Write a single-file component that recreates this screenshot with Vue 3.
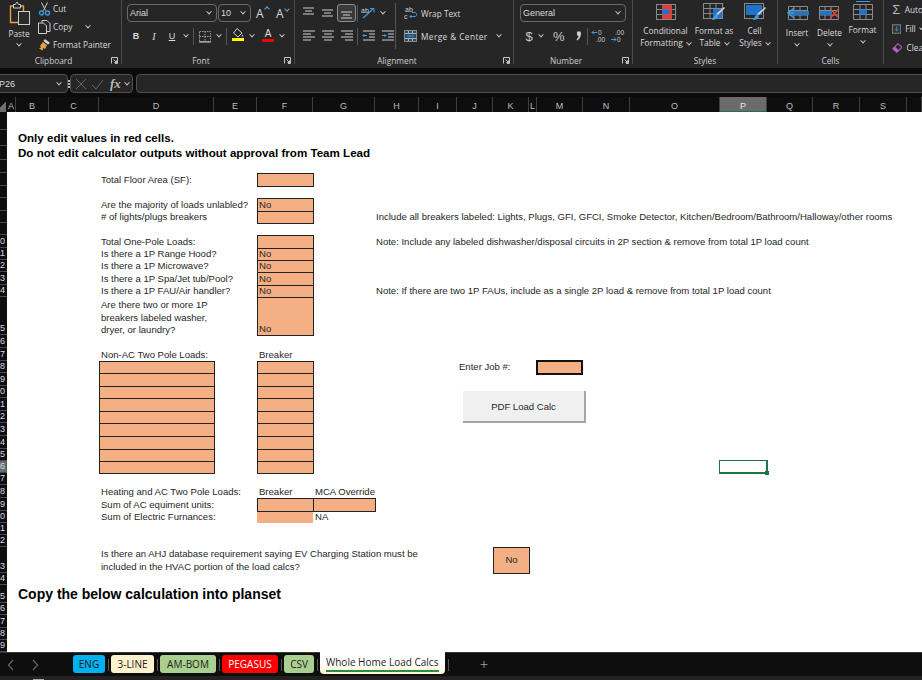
<script setup>
const cols = [
  ["A", 9], ["B", 33], ["C", 50], ["D", 115], ["E", 43], ["F", 56], ["G", 62], ["H", 44],
  ["I", 38], ["J", 36], ["K", 36], ["L", 8], ["M", 46], ["N", 47], ["O", 90], ["P", 47],
  ["Q", 46], ["R", 47], ["S", 47], ["", 15],
];
const colNames = cols.map((c) => c[0]);
const colTemplate = cols.map((c) => c[1] + "px").join(" ");

// row tops in the sheet, last one closes the grid
const rowTops = [
  112, 130, 146, 160, 173, 186, 198, 211, 223, 235, 248, 260, 272, 285, 297, 335, 348, 361, 373, 386,
  398, 411, 423, 436, 449, 461, 473, 485, 498, 511, 523, 535, 547, 573, 585, 603, 615, 628, 640, 652,
];
const rowHeights = rowTops.slice(1).map((t, i) => t - rowTops[i]);
const rowTemplate = rowHeights.map((h) => h + "px").join(" ");

const cells = [
  { c: "B", r: 2, t: "Only edit values in red cells.", k: "bold" },
  { c: "B", r: 3, t: "Do not edit calculator outputs without approval from Team Lead", k: "bold" },
  { c: "D", r: 5, t: "Total Floor Area (SF):" },
  { c: "D", r: 7, t: "Are the majority of loads unlabled?" },
  { c: "D", r: 8, t: "# of lights/plugs breakers" },
  { c: "H", r: 8, t: "Include all breakers labeled: Lights, Plugs, GFI, GFCI, Smoke Detector, Kitchen/Bedroom/Bathroom/Halloway/other rooms", k: "note" },
  { c: "D", r: 10, t: "Total One-Pole Loads:" },
  { c: "H", r: 10, t: "Note: Include any labeled dishwasher/disposal circuits in 2P section & remove from total 1P load count", k: "note" },
  { c: "D", r: 11, t: "Is there a 1P Range Hood?" },
  { c: "D", r: 12, t: "Is there a 1P Microwave?" },
  { c: "D", r: 13, t: "Is there a 1P Spa/Jet tub/Pool?" },
  { c: "D", r: 14, t: "Is there a 1P FAU/Air handler?" },
  { c: "H", r: 14, t: "Note: If there are two 1P FAUs, include as a single 2P load & remove from total 1P load count", k: "note" },
  { c: "D", r: 15, t: "Are there two or more 1P\nbreakers labeled washer,\ndryer, or laundry?", k: "multi" },
  { c: "D", r: 17, t: "Non-AC Two Pole Loads:" },
  { c: "F", r: 17, t: "Breaker" },
  { c: "J", r: 18, t: "Enter Job #:" },
  { c: "D", r: 28, t: "Heating and AC Two Pole Loads:" },
  { c: "F", r: 28, t: "Breaker" },
  { c: "G", r: 28, t: "MCA Override" },
  { c: "D", r: 29, t: "Sum of AC equiment units:" },
  { c: "D", r: 30, t: "Sum of Electric Furnances:" },
  { c: "F", r: 30, t: "", k: "fill bare" },
  { c: "G", r: 30, t: "NA" },
  { c: "D", r: 33, t: "Is there an AHJ database requirement saying EV Charging Station must be\nincluded in the HVAC portion of the load calcs?" },
  { c: "K", r: 33, t: "No", k: "fill center" },
  { c: "B", r: 35, t: "Copy the below calculation into planset", k: "big" },
  { c: "M", r: 18, t: "", k: "fill job" },
  { c: "F", r: 5, t: "", k: "fill" },
  { c: "F", r: 7, t: "No", k: "fill" },
  { c: "F", r: 8, t: "", k: "fill" },
  { c: "F", r: 10, t: "", k: "fill" },
  { c: "F", r: 11, t: "No", k: "fill" },
  { c: "F", r: 12, t: "No", k: "fill" },
  { c: "F", r: 13, t: "No", k: "fill" },
  { c: "F", r: 14, t: "No", k: "fill" },
  { c: "F", r: 15, t: "No", k: "fill end" },
  { c: "F", r: 29, t: "", k: "fill" },
  { c: "G", r: 29, t: "", k: "fill" },
];
for (let r = 18; r <= 26; r++) {
  cells.push({ c: "D", r, t: "", k: "fill" }, { c: "F", r, t: "", k: "fill" });
}

function cellPlace(cell) {
  return { gridColumn: colNames.indexOf(cell.c) + 2, gridRow: cell.r };
}

const alignRows = [
  [
    { d: "M2 2h11M4 5h7M2 8h11" },
    { d: "M2 4h11M4 7h7M2 10h11" },
    { d: "M2 6h11M4 9h7M2 12h11", on: true },
  ],
  [
    { d: "M2 2h12M2 5h8M2 8h12M2 11h8" },
    { d: "M2 2h12M4 5h8M2 8h12M4 11h8" },
    { d: "M2 2h12M6 5h8M2 8h12M6 11h8" },
  ],
];

const tabs = [
  { t: "ENG", k: "eng" },
  { t: "3-LINE", k: "line" },
  { t: "AM-BOM", k: "bom" },
  { t: "PEGASUS", k: "peg" },
  { t: "CSV", k: "csv" },
];
</script>

<template>
  <div class="app">
    <div class="ribbon">
      <section class="group clipboard">
        <div class="body clip-body">
          <div class="paste">
            <svg width="22" height="24" viewBox="0 0 22 24">
              <path d="M5 4H1.500V20.500H9" fill="none" stroke="#e6a040" stroke-width="1.400" />
              <path d="M11 4h3.500v5" fill="none" stroke="#e6a040" stroke-width="1.400" />
              <path d="M4.500 2.500h2l1-2h1l1 2h2V6h-7z" fill="none" stroke="#cfcfcf" />
              <rect x="9.500" y="9.500" width="11" height="13" fill="#2a2a2a" stroke="#cfcfcf" />
            </svg>
            <span>Paste</span>
            <i class="chev"></i>
          </div>
          <div class="clip-tools">
            <div class="tool-row">
              <svg width="13" height="14" viewBox="0 0 13 14">
                <path d="M3.500 0.500l4 8M9.500 0.500l-4 8" stroke="#cfcfcf" fill="none" />
                <circle cx="3.500" cy="11" r="2" fill="none" stroke="#3d9be0" stroke-width="1.300" />
                <circle cx="9.500" cy="11" r="2" fill="none" stroke="#3d9be0" stroke-width="1.300" />
              </svg>
              <span>Cut</span>
            </div>
            <div class="tool-row">
              <svg width="13" height="14" viewBox="0 0 13 14">
                <path d="M4 2.500V0.500h5l3 3v8H8.500" fill="none" stroke="#cfcfcf" />
                <path d="M0.500 3h5l3 3v7.500h-8z" fill="none" stroke="#cfcfcf" />
              </svg>
              <span>Copy</span>
              <i class="chev copy-chev"></i>
            </div>
            <div class="tool-row">
              <svg width="13" height="14" viewBox="0 0 13 14">
                <path d="M7 1l5 4-2 1.500L5.500 3z" fill="#d8d8d8" />
                <path d="M5 4l4 3-2 4-1.500-1-1 2.500L1 10.500l2-1L2 8z" fill="#e6a040" />
              </svg>
              <span>Format Painter</span>
            </div>
          </div>
        </div>
        <footer class="label">
          Clipboard
          <svg class="launch" width="7" height="7" viewBox="0 0 7 7"><path d="M0.500 6.500V0.500H6.500V6.500H4M2.500 2.500l3 3M5.500 3.500v2h-2" fill="none" stroke="#c4c4c4" /></svg>
        </footer>
      </section>

      <section class="group font">
        <div class="body stack">
          <div class="row first">
            <div class="select font-name">Arial<i class="chev"></i></div>
            <div class="select font-size">10<i class="chev"></i></div>
            <span class="grow-a">A<em class="up"></em></span>
            <span class="shrink-a">A<em class="down"></em></span>
          </div>
          <div class="row second">
            <span class="btn t18 b-bold">B</span>
            <span class="btn t18 b-italic">I</span>
            <span class="btn t18 b-under">U</span>
            <span class="btn t10"><i class="chev"></i></span>
            <span class="sep s-a"></span>
            <span class="btn t18">
              <svg width="14" height="13" viewBox="0 0 14 13">
                <path d="M1.500 1.500h11v10h-11zM7 1.500v10M1.500 6.500h11" fill="none" stroke="#9a9a9a" stroke-dasharray="1.500 1" />
                <path d="M1 12h12" stroke="#d0d0d0" />
              </svg>
            </span>
            <span class="btn t10"><i class="chev"></i></span>
            <span class="sep s-b"></span>
            <span class="btn t18 colored">
              <svg width="12" height="10" viewBox="0 0 12 10">
                <path d="M5 0.500l5 4.500-4 4L1.500 5z" fill="none" stroke="#d0d0d0" />
                <path d="M10.500 6.500l1 2h-2z" fill="#d0d0d0" />
              </svg>
              <u class="bar yellow"></u>
            </span>
            <span class="btn t10 narrow"><i class="chev"></i></span>
            <span class="btn t18 colored gap3">
              <span class="color-a">A</span>
              <u class="bar red"></u>
            </span>
            <span class="btn t10"><i class="chev"></i></span>
          </div>
        </div>
        <footer class="label">
          Font
          <svg class="launch" width="7" height="7" viewBox="0 0 7 7"><path d="M0.500 6.500V0.500H6.500V6.500H4M2.500 2.500l3 3M5.500 3.500v2h-2" fill="none" stroke="#c4c4c4" /></svg>
        </footer>
      </section>

      <section class="group alignment">
        <div class="body align-body">
          <div class="stack align-left">
            <div v-for="(line, i) in alignRows" :key="i" class="row" :class="i === 0 ? 'first' : 'second'">
              <span v-for="ic in line" :key="ic.d" class="btn t19" :class="{ on: ic.on }">
                <svg width="15" height="14" viewBox="0 0 15 14">
                  <path :d="ic.d" stroke="#cfcfcf" fill="none" />
                </svg>
              </span>
              <span class="sep s-c"></span>
              <template v-if="i === 0">
                <span class="btn t19">
                  <svg width="16" height="14" viewBox="0 0 16 14">
                    <path d="M2 12L12 3" stroke="#3d9be0" stroke-width="1.200" />
                    <path d="M9 2.500h4v4" stroke="#3d9be0" fill="none" />
                    <text x="0" y="7" font-size="7" fill="#cfcfcf" font-family="Liberation Sans">ab</text>
                  </svg>
                </span>
                <span class="btn t10"><i class="chev"></i></span>
              </template>
              <template v-else>
                <span class="btn t19">
                  <svg width="15" height="14" viewBox="0 0 15 14">
                    <path d="M2 2h12M8 5h6M8 8h6M2 11h12" stroke="#cfcfcf" fill="none" />
                    <path d="M6 6.500H2M3.500 5L2 6.500 3.500 8" stroke="#3d9be0" fill="none" />
                  </svg>
                </span>
                <span class="btn t19">
                  <svg width="15" height="14" viewBox="0 0 15 14">
                    <path d="M2 2h12M8 5h6M8 8h6M2 11h12" stroke="#cfcfcf" fill="none" />
                    <path d="M2 6.500h4M4.500 5L6 6.500 4.500 8" stroke="#3d9be0" fill="none" />
                  </svg>
                </span>
              </template>
            </div>
          </div>
          <div class="align-right stack">
            <div class="row first wide-tool">
              <svg width="14" height="14" viewBox="0 0 14 14">
                <text x="1" y="6" font-size="7" fill="#cfcfcf" font-family="Liberation Sans">ab</text>
                <text x="0" y="13" font-size="7" fill="#cfcfcf" font-family="Liberation Sans">c</text>
                <path d="M6 10.500h5c2 0 2-4 0-4H8M7.500 9L6 10.500 7.500 12" stroke="#3d9be0" fill="none" />
              </svg>
              <span class="wrap-text">Wrap Text</span>
            </div>
            <div class="row second wide-tool">
              <svg width="14" height="13" viewBox="0 0 14 13">
                <rect x="0.500" y="0.500" width="12" height="11" fill="#2a4a68" stroke="#8a8a8a" />
                <path d="M1 3.500h11M1 8.500h11M4.500 1v2M8.500 1v2M4.500 9v2M8.500 9v2" stroke="#b0b0b0" />
                <path d="M3 6h7" stroke="#3d9be0" />
              </svg>
              <span class="merge-text">Merge &amp; Center</span>
              <i class="chev merge-chev"></i>
            </div>
          </div>
        </div>
        <footer class="label">
          Alignment
          <svg class="launch" width="7" height="7" viewBox="0 0 7 7"><path d="M0.500 6.500V0.500H6.500V6.500H4M2.500 2.500l3 3M5.500 3.500v2h-2" fill="none" stroke="#c4c4c4" /></svg>
        </footer>
      </section>

      <section class="group number">
        <div class="body stack">
          <div class="row first">
            <div class="select num-format">General<i class="chev"></i></div>
          </div>
          <div class="row second num-tools">
            <span class="num-sym dollar">$</span>
            <span class="btn t10"><i class="chev"></i></span>
            <span class="num-sym pct">%</span>
            <svg class="comma" width="6" height="10" viewBox="0 0 6 10">
              <path d="M1 0.500h3.500c1 2.500 0.500 6-3 9L0.500 8.500C2 7 2.500 5.500 2.500 4.500H1z" fill="#d0d0d0" />
            </svg>
            <span class="sep s-d"></span>
            <span class="btn t19">
              <svg width="15" height="14" viewBox="0 0 15 14">
                <text x="7" y="6" font-size="6.500" fill="#cfcfcf" font-family="Liberation Sans">0</text>
                <text x="5" y="13" font-size="6.500" fill="#cfcfcf" font-family="Liberation Sans">.00</text>
                <path d="M6 3.500H1M3 1.500L1 3.500l2 2" stroke="#3d9be0" fill="none" />
              </svg>
            </span>
            <span class="btn t19">
              <svg width="15" height="14" viewBox="0 0 15 14">
                <text x="5" y="6" font-size="6.500" fill="#cfcfcf" font-family="Liberation Sans">.00</text>
                <text x="7" y="13" font-size="6.500" fill="#cfcfcf" font-family="Liberation Sans">0</text>
                <path d="M1 10.500h5M4 8.500l2 2-2 2" stroke="#3d9be0" fill="none" />
              </svg>
            </span>
          </div>
        </div>
        <footer class="label">
          Number
          <svg class="launch" width="7" height="7" viewBox="0 0 7 7"><path d="M0.500 6.500V0.500H6.500V6.500H4M2.500 2.500l3 3M5.500 3.500v2h-2" fill="none" stroke="#c4c4c4" /></svg>
        </footer>
      </section>

      <section class="group styles">
        <div class="body big-row">
          <div class="big-btn w49">
            <svg width="22" height="18" viewBox="0 0 22 18">
              <rect x="1.500" y="1.500" width="19" height="15" fill="none" stroke="#8a8a8a" />
              <path d="M8 1.500v15M14 1.500v15M1.500 6.500h19M1.500 11.500h19" stroke="#8a8a8a" />
              <rect x="7" y="2" width="10" height="4.500" fill="#e03c3c" />
              <rect x="7" y="6.500" width="7" height="5" fill="#1f74c9" />
              <rect x="14" y="6.500" width="3" height="5" fill="#e03c3c" />
              <rect x="7" y="11.500" width="10" height="4.500" fill="#e03c3c" />
            </svg>
            <span>Conditional</span>
            <span>Formatting<i class="chev inline"></i></span>
          </div>
          <div class="big-btn w48">
            <svg width="24" height="18" viewBox="0 0 24 18">
              <rect x="1.500" y="0.500" width="19" height="15" fill="none" stroke="#8a8a8a" />
              <path d="M8 0.500v15M14 0.500v15M1.500 5.500h19M1.500 10.500h19" stroke="#8a8a8a" />
              <rect x="11" y="6" width="9" height="9" fill="#1f74c9" />
              <path d="M22 4l1 1-7 7-2-1z" fill="#cfcfcf" />
              <path d="M14 11l2 2c-1 3-3 4-6 4 1-2 2-4 4-6z" fill="#3d9be0" />
            </svg>
            <span>Format as</span>
            <span>Table<i class="chev inline"></i></span>
          </div>
          <div class="big-btn w29">
            <svg width="24" height="18" viewBox="0 0 24 18">
              <rect x="1.500" y="0.500" width="19" height="15" fill="none" stroke="#8a8a8a" />
              <rect x="3" y="2" width="16" height="10" fill="#1f74c9" />
              <path d="M22 4l1 1-7 7-2-1z" fill="#cfcfcf" />
              <path d="M14 11l2 2c-1 3-3 4-6 4 1-2 2-4 4-6z" fill="#3d9be0" />
            </svg>
            <span>Cell</span>
            <span>Styles<i class="chev inline"></i></span>
          </div>
        </div>
        <footer class="label plain">Styles</footer>
      </section>

      <section class="group cellsgrp">
        <div class="body big-row">
          <div class="big-btn w32 low">
            <svg width="25" height="18" viewBox="0 0 25 18">
              <path d="M3.500 2.500h19v13h-19zM9 2.500v13M15 2.500v13M3.500 6.500h19M3.500 11h19" fill="none" stroke="#8a8a8a" />
              <rect x="6" y="7" width="18" height="4" fill="#1f74c9" />
              <path d="M9 4L3 9l6 5M3 9h6" fill="none" stroke="#3d9be0" stroke-width="1.400" />
            </svg>
            <span>Insert</span>
            <i class="chev"></i>
          </div>
          <div class="big-btn w33 low">
            <svg width="25" height="18" viewBox="0 0 25 18">
              <path d="M2.500 2.500h19v13h-19zM8 2.500v13M14 2.500v13M2.500 6.500h19M2.500 11h19" fill="none" stroke="#8a8a8a" />
              <rect x="3" y="7" width="12" height="4" fill="#1f74c9" />
              <path d="M13 4.500l9 10M22 4.500l-9 10" stroke="#d84a3a" stroke-width="1.300" />
            </svg>
            <span>Delete</span>
            <i class="chev"></i>
          </div>
          <div class="big-btn w33 high">
            <svg width="22" height="21" viewBox="0 0 22 21">
              <path d="M4 1.500h14" stroke="#3d9be0" />
              <path d="M1.500 4.500h19v15h-19zM8 4.500v15M14 4.500v15M1.500 9.500h19M1.500 14.500h19" fill="none" stroke="#8a8a8a" />
              <rect x="7" y="9.500" width="8" height="5" fill="#1f74c9" />
            </svg>
            <span>Format</span>
            <i class="chev"></i>
          </div>
        </div>
        <footer class="label plain">Cells</footer>
      </section>

      <section class="group editing">
        <div class="edit-row">
          <span class="sigma">Σ</span><span>Auto</span>
        </div>
        <div class="edit-row">
          <svg width="12" height="12" viewBox="0 0 12 12">
            <rect x="0.500" y="0.500" width="11" height="11" fill="#333" stroke="#9a9a9a" />
            <path d="M6 2.500v6M3.500 6L6 8.500 8.500 6" stroke="#3d9be0" fill="none" />
          </svg>
          <span>Fill</span><i class="chev"></i>
        </div>
        <div class="edit-row">
          <svg width="13" height="12" viewBox="0 0 13 12">
            <path d="M7.500 0.500L12.500 5 6 11.500 1 7z" fill="none" stroke="#c05cc8" stroke-width="1.300" />
            <path d="M4 4.500L8.500 9 6 11.500 1 7z" fill="#c05cc8" />
          </svg>
          <span>Clea</span>
        </div>
      </section>
    </div>

    <div class="formula">
      <div class="namebox"><span>P26</span><i class="chev"></i></div>
      <div class="dots"><i></i><i></i><i></i></div>
      <div class="fx-box">
        <svg width="12" height="12" viewBox="0 0 12 12"><path d="M1 1l10 10M11 1L1 11" stroke="#666" fill="none" /></svg>
        <svg width="13" height="12" viewBox="0 0 13 12"><path d="M1 7l4 4 7-9" stroke="#666" fill="none" /></svg>
        <span class="fx">fx</span>
        <i class="chev"></i>
      </div>
      <div class="input"></div>
    </div>

    <div class="colhead">
      <div class="corner"></div>
      <div class="colnames" :style="{ gridTemplateColumns: colTemplate }">
        <div v-for="c in cols" :key="c[0]" class="colname" :class="{ active: c[0] === 'P' }">{{ c[0] }}</div>
      </div>
    </div>

    <div class="sheet" :style="{ gridTemplateColumns: '7px ' + colTemplate, gridTemplateRows: rowTemplate }">
      <div
        v-for="(h, i) in rowHeights"
        :key="'row' + i"
        class="rowname"
        :class="{ active: i === 25 }"
        :style="{ gridRow: i + 1 }"
      >
        <span>{{ i >= 9 ? i + 1 : "" }}</span>
      </div>
      <div class="paper"></div>
      <div
        v-for="cell in cells"
        :key="cell.c + cell.r"
        class="cell"
        :class="cell.k"
        :style="cellPlace(cell)"
      >{{ cell.t }}</div>
      <div class="selected"><i></i></div>
      <div class="macro">PDF Load Calc</div>
    </div>

    <div class="tabbar">
      <svg class="nav" width="8" height="12" viewBox="0 0 8 12"><path d="M6 1L1.500 6 6 11" stroke="#666" fill="none" stroke-width="1.200" /></svg>
      <svg class="nav next" width="8" height="12" viewBox="0 0 8 12"><path d="M2 1l4.500 5L2 11" stroke="#666" fill="none" stroke-width="1.200" /></svg>
      <div class="tabs">
        <template v-for="tab in tabs" :key="tab.t">
          <div class="tab" :class="tab.k">{{ tab.t }}</div>
          <span class="tab-sep"></span>
        </template>
        <div class="tab-active"><span>Whole Home Load Calcs</span></div>
        <span class="tab-sep"></span>
        <span class="plus">+</span>
      </div>
    </div>
    <div class="status"><i></i></div>
  </div>
</template>

<style scoped>
.app {
  width: 922px;
  height: 680px;
  overflow: hidden;
  background: #0b0b0b;
  color: #dcdcdc;
  font-family: "Open Sans", "Noto Sans", sans-serif;
  font-size: 8.3px;
}

/* ribbon */
.ribbon {
  display: flex;
  height: 68px;
  background: #262626;
}
.group {
  flex: none;
  display: flex;
  flex-direction: column;
  height: 64px;
  border-right: 1px solid #4c4c4c;
}
.clipboard { width: 121px; }
.font { width: 172px; }
.alignment { width: 218px; }
.number { width: 118px; }
.styles { width: 144px; }
.cellsgrp { width: 105px; }
.editing { width: 39px; border-right: 0; padding-left: 8px; box-sizing: border-box; }
.body {
  flex: 1;
  min-height: 0;
}
.label {
  position: relative;
  height: 14px;
  margin-bottom: -4px;
  padding-right: 14px;
  line-height: 14px;
  text-align: center;
  color: #d0d0d0;
  font-size: 8.3px;
}
.label.plain { padding-right: 0; }
.launch {
  position: absolute;
  right: 3px;
  top: 3px;
}
.chev {
  display: inline-block;
  width: 3px;
  height: 3px;
  border-right: 1px solid #c8c8c8;
  border-bottom: 1px solid #c8c8c8;
  transform: rotate(45deg) translate(-1px, -1px);
}
.chev.inline {
  margin-left: 4px;
  width: 3px;
  height: 3px;
}
.clip-body {
  display: flex;
}
.paste {
  width: 38px;
  display: flex;
  flex-direction: column;
  align-items: center;
  padding-top: 2px;
  box-sizing: border-box;
}
.paste svg { margin-left: 2px; }
.paste span { margin-top: 2px; color: #dcdcdc; }
.paste .chev { margin-top: 4px; }
.clip-tools {
  display: flex;
  flex-direction: column;
  padding-top: 0;
}
.tool-row {
  display: flex;
  align-items: center;
  gap: 2px;
  height: 18px;
  margin-bottom: 1px;
}
.tool-row svg { width: 13px; margin-right: 0; }
.copy-chev { margin-left: 12px; }

.stack {
  display: flex;
  flex-direction: column;
}
.row {
  display: flex;
  align-items: center;
}
.row.first {
  height: 18px;
  margin-top: 4px;
}
.row.second {
  height: 18px;
  margin-top: 5px;
}
.select {
  display: flex;
  align-items: center;
  justify-content: space-between;
  height: 18px;
  box-sizing: border-box;
  padding: 0 5px 0 2px;
  border: 1px solid #6a6a6a;
  border-radius: 4px;
  font-family: "Liberation Sans", sans-serif;
  font-size: 9px;
}
.font .stack { padding-left: 5px; }
.font-name { width: 90px; }
.font-size { width: 33px; margin-left: 1px; }
.grow-a, .shrink-a {
  position: relative;
  font-size: 12px;
  margin-left: 5px;
  width: 15px;
  color: #d8d8d8;
}
.up, .down {
  position: absolute;
  top: 2px;
  left: 9px;
  width: 3px;
  height: 3px;
  border-left: 1px solid #5aa8e6;
  border-top: 1px solid #5aa8e6;
  transform: rotate(45deg);
}
.down { transform: rotate(225deg); }
.btn {
  flex: none;
  display: flex;
  align-items: center;
  justify-content: center;
  height: 18px;
  box-sizing: border-box;
}
.t18 { width: 18px; }
.t19 { width: 19px; }
.t10 { width: 10px; }
.b-bold { font-family: "Liberation Sans", sans-serif; font-weight: 700; font-size: 9px; }
.b-italic { font-family: "Liberation Serif", serif; font-style: italic; font-size: 10px; }
.b-under { font-family: "Liberation Sans", sans-serif; text-decoration: underline; font-size: 9px; }
.sep {
  flex: none;
  width: 1px;
  height: 17px;
  background: #555;
}
.s-a { margin: 0 2px 0 2px; }
.s-b { margin: 0 2px 0 2px; }
.s-c { margin: 0 1px; }
.s-d { margin: 0 1px 0 5px; }
.colored {
  flex-direction: column;
  justify-content: flex-start;
  padding-top: 1px;
}
.narrow { width: 9px; }
.gap3 { margin-left: 3px; }
.color-a {
  font-family: "Liberation Sans", sans-serif;
  font-size: 10px;
  line-height: 11px;
}
.bar {
  width: 12px;
  height: 3px;
}
.yellow { background: #ffff00; }
.red { background: #ff0000; }

.align-body {
  display: flex;
}
.align-left { padding-left: 4px; width: 100px; box-sizing: border-box; }
.on {
  border: 1px solid #8f8f8f;
  border-radius: 3px;
  background: #3a3a3a;
}
.align-right {
  border-left: 1px solid #555;
  height: 46px;
  margin-top: 3px;
  padding-left: 8px;
}
.align-right .row.first { margin-top: 1px; }
.wide-tool { gap: 3px; font-size: 8.3px; }
.merge-text { letter-spacing: 0.4px; }
.merge-chev { margin-left: 6px; }

.number .stack { padding-left: 6px; }
.num-format { width: 106px; }
.num-tools { padding-left: 2px; }
.num-sym {
  font-size: 13px;
  color: #c8c8c8;
}
.dollar { width: 14px; text-align: center; font-family: "Liberation Sans", sans-serif; }
.pct { width: 18px; margin-left: 7px; font-size: 13px; font-family: "Liberation Sans", sans-serif; }
.comma { flex: none; margin-left: 5px; }

.big-row {
  display: flex;
  align-items: flex-start;
  padding-left: 8px;
}
.big-btn {
  flex: none;
  display: flex;
  flex-direction: column;
  align-items: center;
  line-height: 12px;
  padding-top: 3px;
  white-space: nowrap;
}
.big-btn svg { margin-bottom: 4px; }
.w49 { width: 49px; }
.w48 { width: 48px; }
.w29 { width: 29px; margin-left: 2px; }
.w32 { width: 32px; }
.w33 { width: 33px; }
.cellsgrp .big-row { padding-left: 3px; }
.big-btn.low { padding-top: 4px; }
.big-btn.low svg { margin-bottom: 5px; }
.big-btn.low .chev { margin-top: 4px; }
.big-btn.high { padding-top: 0; }
.big-btn.high svg { margin-bottom: 3px; }
.big-btn.high .chev { margin-top: 4px; }
.edit-row {
  display: flex;
  align-items: center;
  gap: 4px;
  height: 19px;
  white-space: nowrap;
}
.sigma { font-size: 13px; width: 12px; text-align: center; color: #b8b8b8; font-family: "Liberation Sans", sans-serif; }

/* formula bar */
.formula {
  display: flex;
  align-items: center;
  height: 19px;
  margin-top: 6px;
}
.namebox {
  flex: none;
  display: flex;
  align-items: center;
  justify-content: space-between;
  width: 72px;
  height: 19px;
  margin-left: -4px;
  padding: 0 6px 0 2px;
  box-sizing: border-box;
  background: #262626;
  border: 1px solid #505050;
  border-radius: 4px;
  font-size: 9px;
  font-family: "Liberation Sans", sans-serif;
}
.dots {
  width: 15px;
  display: flex;
  flex-direction: column;
  align-items: center;
  gap: 1px;
}
.dots i { width: 2px; height: 2px; background: #bbb; }
.fx-box {
  flex: none;
  display: flex;
  align-items: center;
  width: 63px;
  height: 19px;
  box-sizing: border-box;
  padding-left: 4px;
  gap: 4px;
  background: #262626;
  border: 1px solid #505050;
  border-radius: 4px;
}
.fx {
  font-family: "Liberation Serif", serif;
  font-style: italic;
  font-size: 13px;
  font-weight: 700;
  color: #bbb;
  margin-left: 2px;
}
.input {
  flex: none;
  width: 790px;
  height: 19px;
  margin-left: 3px;
  box-sizing: border-box;
  background: #262626;
  border: 1px solid #505050;
  border-radius: 4px;
}

/* column header */
.colhead {
  display: flex;
  height: 15px;
  margin-top: 4px;
  background: #0e0e0e;
}
.corner {
  flex: none;
  width: 6px;
  margin-right: 1px;
  background: linear-gradient(135deg, transparent 50%, #6e6e6e 50%);
}
.colnames {
  display: grid;
  flex: 1;
}
.colname {
  display: flex;
  align-items: center;
  justify-content: center;
  padding-top: 3px;
  box-sizing: border-box;
  border-right: 1px solid #3e3e3e;
  color: #bdbdbd;
  font-size: 9px;
  font-family: "Liberation Sans", sans-serif;
}
.colname.active {
  background: #6b6b6b;
  color: #e8e8e8;
  border-bottom: 1px solid #217346;
}

/* sheet */
.sheet {
  position: relative;
  display: grid;
  height: 540px;
  font-family: "Liberation Sans", Arial, sans-serif;
  font-size: 9.55px;
  line-height: 12.4px;
  color: #262626;
  overflow: hidden;
}
.paper {
  grid-column: 2 / -1;
  grid-row: 1 / -1;
  background: #fff;
}
.rowname {
  grid-column: 1;
  display: flex;
  align-items: flex-end;
  justify-content: flex-end;
  padding-right: 2px;
  overflow: hidden;
  background: #0e0e0e;
  border-bottom: 1px solid #4a4a4a;
  box-sizing: border-box;
  color: #cfd8e6;
  font-size: 9px;
  line-height: 11px;
}
.rowname.active {
  background: #6b6b6b;
  border-right: 1px solid #217346;
  padding-right: 1px;
}
.cell {
  display: flex;
  align-items: center;
  padding-left: 2px;
  padding-top: 1px;
  box-sizing: border-box;
  white-space: pre;
  min-width: 0;
}
.note { padding-left: 1px; }
.multi { padding-top: 4px; }
.bold {
  font-size: 11.6px;
  font-weight: 700;
  color: #000;
}
.big {
  font-size: 14px;
  font-weight: 700;
  color: #000;
  padding-top: 0;
}
.fill {
  background: #f4b084;
  border: 1px solid #222;
  margin: 0 -1px -1px 0;
  box-sizing: border-box;
  padding: 0 0 0 1px;
}
.end { align-items: flex-end; }
.center { justify-content: center; padding-left: 0; }
.bare { border: 0; margin: 0; }
.job { border-width: 2px; border-color: #111; margin: -1px 0 -2px -1px; }
.selected {
  position: relative;
  grid-column: 17;
  grid-row: 26;
  margin: -1px;
  border: 2px solid #217346;
  border-top-width: 1px;
  border-left-width: 1px;
}
.selected i {
  position: absolute;
  right: -3px;
  bottom: -3px;
  width: 4px;
  height: 4px;
  background: #217346;
}
.macro {
  position: absolute;
  left: 463px;
  top: 279px;
  display: flex;
  align-items: center;
  justify-content: center;
  width: 123px;
  height: 32px;
  padding-top: 2px;
  box-sizing: border-box;
  background: #f0f0f0;
  border-right: 2px solid #a6a6a6;
  border-bottom: 2px solid #a6a6a6;
}

/* sheet tabs */
.tabbar {
  position: relative;
  height: 24px;
  display: flex;
  align-items: center;
  background: #0e0e0e;
  border-top: 1px solid #3a3a3a;
  box-sizing: border-box;
}
.nav { margin-left: 7px; flex: none; }
.nav.next { margin-left: 16px; }
.tabs {
  display: flex;
  align-items: flex-start;
  height: 100%;
  margin-left: 34px;
  font-size: 10px;
}
.tab {
  height: 18px;
  margin-top: 2px;
  padding: 0 5px;
  display: flex;
  align-items: center;
  border-radius: 3px;
  color: #1c1c1c;
  white-space: nowrap;
  box-sizing: border-box;
}
.eng { width: 32px; background: #00b0f0; justify-content: center; }
.line { width: 43px; background: #fff2cc; justify-content: center; }
.bom { width: 56px; background: #a9d08e; justify-content: center; }
.peg { width: 56px; background: #ff0000; color: #fff; justify-content: center; }
.csv { width: 30px; background: #a9d08e; justify-content: center; }
.tab-sep {
  flex: none;
  width: 1px;
  height: 12px;
  margin: 6px 2px 0 3px;
  background: #555;
}
.tab-active {
  width: 125px;
  height: 22px;
  margin-top: -1px;
  padding: 4px 6px 0;
  box-sizing: border-box;
  border-radius: 0 0 4px 4px;
  background: linear-gradient(#fff 55%, #fff2cc);
  color: #1c1c1c;
  font-size: 10px;
  font-weight: 500;
  white-space: nowrap;
}
.tab-active span {
  display: block;
  height: 14px;
  line-height: 12px;
  border-bottom: 2px solid #2e8b46;
}
.plus {
  margin-left: 29px;
  margin-top: 3px;
  font-size: 14px;
  color: #8a8a8a;
  line-height: 18px;
}
.status {
  height: 4px;
  background: #222;
  overflow: hidden;
}
.status i {
  display: block;
  width: 11px;
  height: 1px;
  margin: 3px 0 0 33px;
  background: #aaa;
}
</style>

<style>
html, body {
  margin: 0;
  background: #0b0b0b;
}
</style>
